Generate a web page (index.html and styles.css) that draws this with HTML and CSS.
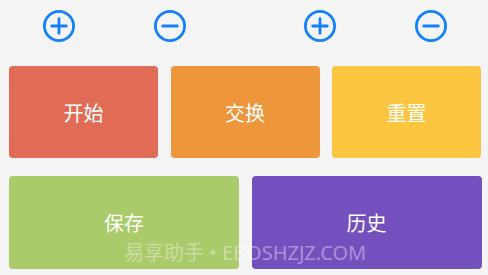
FILE: index.html
```html
<!DOCTYPE html>
<html lang="zh">
<head>
<meta charset="utf-8">
<link rel="stylesheet" href="styles.css">
</head>
<body>
<div class="page">
  <div class="icons">
    <svg class="icon" viewBox="0 0 32 32"><circle cx="16" cy="16" r="14.6" fill="none" stroke="#1580fb" stroke-width="2.8"/><path d="M16 8.7V23.3M8.7 16H23.3" stroke="#1580fb" stroke-width="2.8" stroke-linecap="round"/></svg>
    <svg class="icon" viewBox="0 0 32 32"><circle cx="16" cy="16" r="14.6" fill="none" stroke="#1580fb" stroke-width="2.8"/><path d="M8.7 16H23.3" stroke="#1580fb" stroke-width="2.8" stroke-linecap="round"/></svg>
    <svg class="icon icon-wide" viewBox="0 0 32 32"><circle cx="16" cy="16" r="14.6" fill="none" stroke="#1580fb" stroke-width="2.8"/><path d="M16 8.7V23.3M8.7 16H23.3" stroke="#1580fb" stroke-width="2.8" stroke-linecap="round"/></svg>
    <svg class="icon" viewBox="0 0 32 32"><circle cx="16" cy="16" r="14.6" fill="none" stroke="#1580fb" stroke-width="2.8"/><path d="M8.7 16H23.3" stroke="#1580fb" stroke-width="2.8" stroke-linecap="round"/></svg>
  </div>
  <div class="row row-3">
    <div class="btn red">开始</div>
    <div class="btn orange">交换</div>
    <div class="btn yellow">重置</div>
  </div>
  <div class="row row-2">
    <div class="btn green">保存</div>
    <div class="btn purple">历史</div>
  </div>
  <div class="watermark">易享助手 • EBOSHZJZ.COM</div>
</div>
</body>
</html>
```
FILE: styles.css
```css
html, body {
  margin: 0;
  padding: 0;
  background: #f4f4f4;
}
.page {
  position: relative;
  width: 488px;
  height: 275px;
  overflow: hidden;
  font-family: "Noto Sans CJK SC", "Noto Sans", sans-serif;
}
.icons {
  display: flex;
  gap: 79px;
  padding: 10px 0 0 43px;
  height: 32px;
}
.icon {
  width: 32px;
  height: 32px;
  flex: 0 0 32px;
  display: block;
}
.icon-wide {
  margin-left: 39px;
}
.row {
  display: flex;
  gap: 12.5px;
  padding-left: 9px;
}
.row-3 {
  margin-top: 24px;
}
.row-3 .btn {
  width: 149px;
  height: 92px;
}
.row-2 {
  margin-top: 18px;
}
.row-2 .btn {
  width: 230px;
  height: 93px;
}
.btn {
  display: flex;
  align-items: center;
  justify-content: center;
  flex: 0 0 auto;
  border-radius: 4px;
  color: #ffffff;
  font-size: 20px;
}
.red { background: #e06c56; }
.orange { background: #ee963b; }
.yellow { background: #fcc53f; }
.green { background: #abca6a; }
.purple { background: #744fbe; }
.watermark {
  position: absolute;
  left: 124px;
  top: 243px;
  font-size: 20px;
  line-height: 20px;
  color: rgba(255, 255, 255, 0.4);
  white-space: nowrap;
  font-family: "Noto Sans", "Noto Sans CJK SC", sans-serif;
}
```
